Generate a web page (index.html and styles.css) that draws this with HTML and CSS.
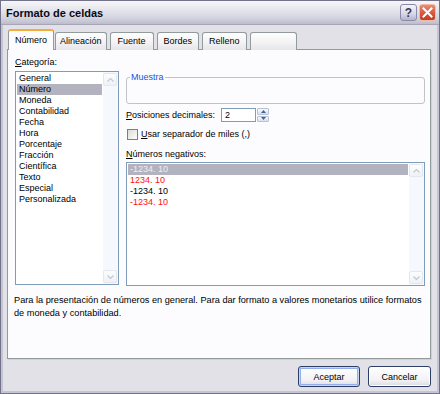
FILE: index.html
```html
<!DOCTYPE html>
<html lang="es">

<head>
    <meta charset="UTF-8">
    <meta name="viewport" content="width=device-width, initial-scale=1.0">
    <title>Formato de celdas</title>
    <link rel="stylesheet" href="styles.css">
</head>

<body>
    <div class="window">
        <div class="titlebar">
            <span class="title">Formato de celdas</span>
            <div class="caption-buttons">
                <span class="cap-btn help">?</span>
                <span class="cap-btn close">
                    <svg width="11" height="11" viewBox="0 0 11 11">
                        <path d="M1.5 1.5 L9.5 9.5 M9.5 1.5 L1.5 9.5" stroke="#fff" stroke-width="2" stroke-linecap="square" />
                    </svg>
                </span>
            </div>
        </div>

        <div class="content">
            <div class="tabs">
                <div class="tab active">Número</div>
                <div class="tab narrow">Alineación</div>
                <div class="tab wide">Fuente</div>
                <div class="tab">Bordes</div>
                <div class="tab">Relleno</div>
                <div class="tab empty"></div>
            </div>

            <div class="panel">
                <div class="columns">
                    <div class="col-left">
                        <div class="label"><u>C</u>ategoría:</div>
                        <div class="listbox cat-list">
                            <ul class="items">
                                <li>General</li>
                                <li class="selected">Número</li>
                                <li>Moneda</li>
                                <li>Contabilidad</li>
                                <li>Fecha</li>
                                <li>Hora</li>
                                <li>Porcentaje</li>
                                <li>Fracción</li>
                                <li>Científica</li>
                                <li>Texto</li>
                                <li>Especial</li>
                                <li>Personalizada</li>
                            </ul>
                            <div class="scrollbar">
                                <span class="arrow">
                                    <svg width="7" height="4" viewBox="0 0 7 4"><path d="M0.5 3.5 L3.5 0.5 L6.5 3.5" fill="none" stroke="#c3c9d3" stroke-width="1.2" /></svg>
                                </span>
                                <span class="arrow">
                                    <svg width="7" height="4" viewBox="0 0 7 4"><path d="M0.5 0.5 L3.5 3.5 L6.5 0.5" fill="none" stroke="#c3c9d3" stroke-width="1.2" /></svg>
                                </span>
                            </div>
                        </div>
                    </div>

                    <div class="col-right">
                        <fieldset class="sample">
                            <legend>Muestra</legend>
                            <div class="sample-body"></div>
                        </fieldset>

                        <div class="row decimals">
                            <span class="row-label"><u>P</u>osiciones decimales:</span>
                            <span class="textbox">2</span>
                            <span class="spinner">
                                <span class="spin">
                                    <svg width="5" height="3" viewBox="0 0 5 3"><path d="M0 3 L2.5 0 L5 3 Z" fill="#4d6185" /></svg>
                                </span>
                                <span class="spin">
                                    <svg width="5" height="3" viewBox="0 0 5 3"><path d="M0 0 L2.5 3 L5 0 Z" fill="#4d6185" /></svg>
                                </span>
                            </span>
                        </div>

                        <div class="row check-row">
                            <span class="checkbox"></span>
                            <span><u>U</u>sar separador de miles (,)</span>
                        </div>

                        <div class="label neg-label"><u>N</u>úmeros negativos:</div>
                        <div class="listbox neg-list">
                            <ul class="items">
                                <li class="selected muted">-1234. 10</li>
                                <li class="red">1234. 10</li>
                                <li>-1234. 10</li>
                                <li class="red">-1234. 10</li>
                            </ul>
                            <div class="scrollbar">
                                <span class="arrow">
                                    <svg width="7" height="4" viewBox="0 0 7 4"><path d="M0.5 3.5 L3.5 0.5 L6.5 3.5" fill="none" stroke="#c3c9d3" stroke-width="1.2" /></svg>
                                </span>
                                <span class="arrow">
                                    <svg width="7" height="4" viewBox="0 0 7 4"><path d="M0.5 0.5 L3.5 3.5 L6.5 0.5" fill="none" stroke="#c3c9d3" stroke-width="1.2" /></svg>
                                </span>
                            </div>
                        </div>
                    </div>
                </div>

                <p class="description">Para la presentación de números en general. Para dar formato a valores monetarios utilice formatos de moneda y contabilidad.</p>
            </div>

            <div class="actions">
                <button class="btn default">Aceptar</button>
                <button class="btn">Cancelar</button>
            </div>
        </div>
    </div>
</body>

</html>
```

FILE: styles.css
```css
html,
body {
    margin: 0;
}

body {
    width: 440px;
    height: 394px;
    overflow: hidden;
    font-family: "Liberation Sans", Arial, sans-serif;
    font-size: 9px;
    color: #000;
    background: #e2e1e7;
}

.window {
    box-sizing: border-box;
    height: 394px;
    display: flex;
    flex-direction: column;
    border: 1px solid #72728a;
    background: #e2e1e7;
    box-shadow: inset 2px 0 0 #c4c4d2, inset -2px 0 0 #c4c4d2, inset 0 -2px 0 #c4c4d2;
}

/* title bar */
.titlebar {
    height: 23px;
    display: flex;
    align-items: center;
    justify-content: space-between;
    padding: 0 3px 0 5px;
    background: linear-gradient(#f7f7fa, #e4e4ec 40%, #d3d3df 75%, #bcbccd);
    border-bottom: 1px solid #a6a6b8;
}

.title {
    font-size: 11px;
    font-weight: bold;
    color: #0a0a14;
}

.caption-buttons {
    display: flex;
    gap: 2px;
}

.cap-btn {
    box-sizing: border-box;
    width: 17px;
    height: 17px;
    border-radius: 3px;
    display: flex;
    align-items: center;
    justify-content: center;
}

.help {
    border: 1px solid #8a8aa6;
    background: linear-gradient(#f4f4fa, #d6d6e6 60%, #b4b4cc);
    color: #3a3a52;
    font-size: 12px;
    font-weight: bold;
}

.close {
    border: 1px solid #f2b8a8;
    background: linear-gradient(#ea8c72, #d9573a 55%, #c13e22);
}

/* body */
.content {
    flex: 1;
    display: flex;
    flex-direction: column;
    padding: 4px 8px 0 6px;
}

.tabs {
    display: flex;
    align-items: flex-end;
    height: 21px;
    padding-left: 1px;
    margin-bottom: -1px;
    position: relative;
    z-index: 1;
}

.tab {
    box-sizing: border-box;
    height: 18px;
    padding: 0 6px;
    margin-right: 3px;
    border: 1px solid #919b9c;
    border-bottom: none;
    border-radius: 3px 3px 0 0;
    background: linear-gradient(#fefefe, #f2f2f4 60%, #e4e4ea);
    line-height: 17px;
}

.tab.narrow {
    padding: 0 4px;
}

.tab.wide {
    padding: 0 7px;
}

.tab.active {
    height: 21px;
    margin-right: 1px;
    border-top: 2px solid #f6ac3a;
    background: #fcfcfe;
    line-height: 18px;
}

.tab.empty {
    width: 47px;
}

.panel {
    height: 310px;
    box-sizing: border-box;
    display: flex;
    flex-direction: column;
    padding: 7px 5px 0 7px;
    border: 1px solid #919b9c;
    background: #fcfcfe;
    box-shadow: 1px 1px 0 #cfd3cf;
}

.columns {
    display: flex;
    gap: 7px;
}

.col-left {
    width: 104px;
    display: flex;
    flex-direction: column;
}

.col-right {
    width: 299px;
    display: flex;
    flex-direction: column;
}

.label {
    height: 11px;
    line-height: 11px;
}

/* list boxes */
.listbox {
    box-sizing: border-box;
    display: flex;
    border: 1px solid #7f9db9;
    background: #fff;
}

.cat-list {
    height: 214px;
    margin-top: 3px;
}

.neg-list {
    height: 124px;
    margin-top: 2px;
}

.items {
    flex: 1;
    list-style: none;
    margin: 0;
    padding: 1px 1px 0 1px;
}

.items li {
    height: 11px;
    line-height: 11px;
    padding-left: 2px;
}

.items li.selected {
    background: #b2b3bf;
}

.items li.muted {
    color: #eeeef2;
}

.items li.red {
    color: #ff1010;
}

.scrollbar {
    width: 14px;
    display: flex;
    flex-direction: column;
    justify-content: space-between;
    padding: 1px 1px 1px 0;
    background: #f5f8fc;
}

.arrow {
    box-sizing: border-box;
    height: 13px;
    display: flex;
    align-items: center;
    justify-content: center;
    border: 1px solid #e3e8ef;
    border-radius: 2px;
    background: linear-gradient(#fdfdfe, #eef1f6);
}

/* right column */
.sample {
    margin: 15px 0 0 0;
    padding: 0;
    border: 1px solid #c2c2c8;
    border-radius: 3px;
}

.sample legend {
    margin-left: 3px;
    padding: 0 1px;
    color: #1c52d8;
    line-height: 11px;
}

.sample-body {
    height: 20px;
}

.row {
    display: flex;
    align-items: center;
}

.decimals {
    height: 14px;
    margin-top: 4px;
}

.row-label {
    width: 95px;
}

.textbox {
    box-sizing: border-box;
    width: 35px;
    height: 14px;
    line-height: 12px;
    padding-left: 3px;
    border: 1px solid #7f9db9;
    background: #fff;
}

.spinner {
    box-sizing: border-box;
    width: 13px;
    height: 14px;
    display: flex;
    flex-direction: column;
    gap: 1px;
    padding: 0 0 0 1px;
    background: #fff;
}

.spin {
    flex: 1;
    display: flex;
    align-items: center;
    justify-content: center;
    border: 1px solid #b5c3d8;
    border-radius: 1px;
    background: linear-gradient(#f8f9fc, #d9dfeb);
}

.check-row {
    height: 12px;
    margin-top: 6px;
    gap: 3px;
}

.checkbox {
    box-sizing: border-box;
    width: 11px;
    height: 11px;
    margin-left: 1px;
    border: 1px solid #6d82a1;
    background: linear-gradient(135deg, #dcdcd6, #fdfdfd);
}

.neg-label {
    margin-top: 9px;
}

.description {
    margin: 8px 0 0 -1px;
    font-size: 9.2px;
    line-height: 13px;
}

/* buttons */
.actions {
    display: flex;
    justify-content: flex-end;
    gap: 8px;
    padding-top: 7px;
}

.btn {
    box-sizing: border-box;
    width: 63px;
    height: 21px;
    padding: 0;
    border: 1px solid #2c3e66;
    border-radius: 3px;
    background: linear-gradient(#ffffff, #f2f2f5 70%, #d9d9e2);
    font-family: inherit;
    font-size: 9px;
    color: #000;
    box-shadow: inset 0 0 0 1px #fff;
}

.btn.default {
    width: 62px;
    box-shadow: inset 0 0 0 1px #c6d6f6, inset 0 0 0 2px #93aeea;
}
```
